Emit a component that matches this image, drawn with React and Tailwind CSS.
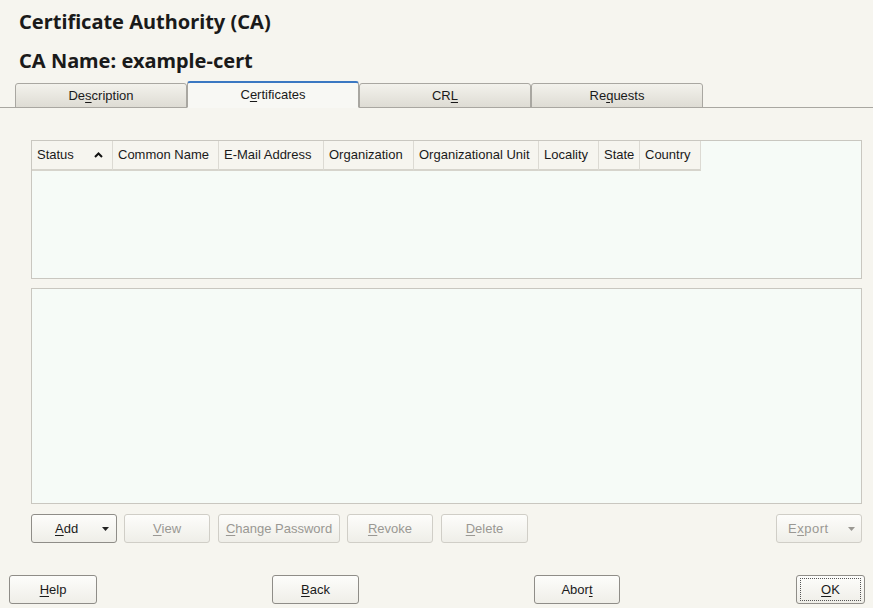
import React from "react";

const ui = { fontFamily: '"Liberation Sans", Arial, sans-serif' };
const heading = { fontFamily: '"Noto Sans", "Open Sans", sans-serif' };

function U({ children }) {
  return <span className="underline underline-offset-2">{children}</span>;
}

function Btn({ children, disabled, className = "", focus }) {
  return (
    <div
      className={
        "flex h-[29px] items-center rounded-[3px] border bg-gradient-to-b from-[#fdfdfb] to-[#efeee8] text-[13px] " +
        (disabled ? "border-[#d0cec7] text-[#9a9893] " : "border-[#8f8d88] text-[#1a1a1a] ") +
        className
      }
    >
      {focus ? (
        <div className="flex h-[23px] w-[calc(100%-6px)] items-center justify-center border border-dotted border-[#555]">
          {children}
        </div>
      ) : (
        children
      )}
    </div>
  );
}

const columns = [
  ["Status", 81],
  ["Common Name", 106],
  ["E-Mail Address", 105],
  ["Organization", 90],
  ["Organizational Unit", 125],
  ["Locality", 60],
  ["State", 41],
  ["Country", 61],
];

export default function App() {
  return (
    <div className="h-[608px] w-[873px] overflow-hidden bg-[#f6f5ef] text-[#1a1a1a]" style={ui}>
      <div className="px-[19px] pt-[10px]">
        <div className="text-[20px] font-bold leading-[24px]" style={heading}>
          Certificate Authority (CA)
        </div>
        <div className="mt-[15px] text-[20px] font-bold leading-[24px]" style={heading}>
          CA Name: example-cert
        </div>
      </div>

      {/* tab strip */}
      <div className="mt-[9px] flex h-[26px] items-end border-b border-[#a9a7a1] pl-[15px]">
        {[
          ["De", "s", "cription", false],
          ["C", "e", "rtificates", true],
          ["CR", "L", "", false],
          ["Re", "q", "uests", false],
        ].map(([a, u, b, sel], i) => (
          <div
            key={i}
            className={
              "-mb-px flex w-[172px] items-center justify-center rounded-t-[3px] border border-[#a9a7a1] text-[13px] " +
              (sel
                ? "h-[27px] border-b-[#f8f8f4] border-t-2 border-t-[#3b78c2] bg-[#f8f8f4]"
                : "h-[25px] bg-gradient-to-b from-[#f3f2ec] to-[#dedcd4]")
            }
          >
            {a}
            <U>{u}</U>
            {b}
          </div>
        ))}
      </div>

      {/* certificate list */}
      <div className="ml-[31px] mr-[11px] mt-[32px] h-[139px] border border-[#c9c7c0] bg-[#f6fbf7]">
        <div className="flex h-[30px] bg-[#f6f5ef]">
          {columns.map(([name, w], i) => (
            <div
              key={name}
              className="flex items-center whitespace-nowrap border-b-2 border-r border-b-[#d6d4cc] border-r-[#dcdad3] px-[5px] text-[13px]"
              style={{ width: w }}
            >
              <span>{name}</span>
              {i === 0 && (
                <svg className="ml-auto mr-[4px]" width="9" height="6" viewBox="0 0 9 6">
                  <path d="M1 5 L4.5 1.5 L8 5" stroke="#111" strokeWidth="2" fill="none" />
                </svg>
              )}
            </div>
          ))}
          <div className="flex-1 bg-[#f6fbf7]" />
        </div>
      </div>

      {/* detail pane */}
      <div className="ml-[31px] mr-[11px] mt-[9px] h-[216px] border border-[#c9c7c0] bg-[#f6fbf7]" />

      {/* action buttons */}
      <div className="mt-[10px] flex pl-[31px] pr-[11px]">
        <Btn className="w-[86px] justify-between pl-[23px] pr-[7px]">
          <span>
            <U>A</U>dd
          </span>
          <svg width="7" height="4" viewBox="0 0 7 4">
            <path d="M0 0 H7 L3.5 4 Z" fill="#222" />
          </svg>
        </Btn>
        <Btn disabled className="ml-[7px] w-[86px] justify-center">
          <U>V</U>iew
        </Btn>
        <Btn disabled className="ml-[8px] w-[122px] justify-center">
          <U>C</U>hange Password
        </Btn>
        <Btn disabled className="ml-[7px] w-[86px] justify-center">
          <U>R</U>evoke
        </Btn>
        <Btn disabled className="ml-[8px] w-[87px] justify-center">
          <U>D</U>elete
        </Btn>
        <Btn disabled className="ml-auto w-[86px] justify-between pl-[11px] pr-[6px]">
          <span className="tracking-[0.5px]">
            E<U>x</U>port
          </span>
          <svg width="7" height="4" viewBox="0 0 7 4">
            <path d="M0 0 H7 L3.5 4 Z" fill="#9a9893" />
          </svg>
        </Btn>
      </div>

      {/* dialog buttons */}
      <div className="mt-[32px] flex items-center pl-[9px] pr-[8px]">
        <Btn className="w-[88px] justify-center">
          <U>H</U>elp
        </Btn>
        <Btn className="ml-[175px] w-[87px] justify-center">
          <U>B</U>ack
        </Btn>
        <Btn className="ml-[175px] w-[86px] justify-center">
          Abor<U>t</U>
        </Btn>
        <Btn focus className="ml-auto w-[69px] justify-center border-[#2a2a2a]">
          <U>O</U>K
        </Btn>
      </div>
    </div>
  );
}
